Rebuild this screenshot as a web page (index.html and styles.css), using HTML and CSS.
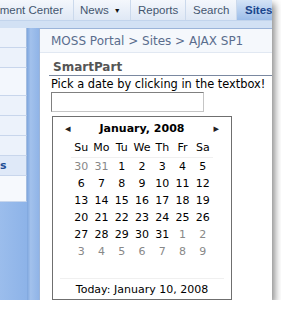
FILE: index.html
```html
<!DOCTYPE html>
<html lang="en">
<head>
  <meta charset="UTF-8" />
  <title>SmartPart</title>
  <link rel="stylesheet" href="styles.css">
</head>
<body>
  <div class="frame">
    <div class="topnav">
      <span class="tab first">Document Center</span>
      <span class="tab news">News <span class="caret">▼</span></span>
      <span class="tab reports">Reports</span>
      <span class="tab search">Search</span>
      <span class="tab selected">Sites</span>
    </div>
    <div class="band"></div>
    <div class="workspace">
      <div class="leftnav">
        <div class="navitem"></div>
        <div class="navitem"></div>
        <div class="navitem tall"></div>
        <div class="navitem"></div>
        <div class="navitem"></div>
        <div class="navitem"></div>
        <div class="navitem current">s</div>
        <div class="navitem last"></div>
      </div>
      <div class="gutter"></div>
      <div class="main">
        <div class="crumb">MOSS Portal &gt; Sites &gt; AJAX SP1</div>
        <div class="webpart">
          <div class="wp-title">SmartPart</div>
          <div class="hint">Pick a date by clicking in the textbox!</div>
          <input type="text" class="datebox" />
          <div class="calendar">
            <div class="cal-head">
              <span class="arrow">◂</span>
              <span class="month">January, 2008</span>
              <span class="arrow">▸</span>
            </div>
            <div class="days" id="days"></div>
            <div class="today">Today: January 10, 2008</div>
          </div>
        </div>
      </div>
    </div>
  </div>

  <script>
    const names = ["Su", "Mo", "Tu", "We", "Th", "Fr", "Sa"];
    const grid = document.getElementById("days");
    names.forEach(n => {
      const c = document.createElement("span");
      c.className = "dayname";
      c.textContent = n;
      grid.appendChild(c);
    });
    const cells = [30, 31];
    for (let d = 1; d <= 31; d++) cells.push(d);
    for (let d = 1; d <= 9; d++) cells.push(d);
    cells.forEach((d, i) => {
      const c = document.createElement("span");
      const other = i < 2 || i > 32;
      c.className = other ? "day other" : "day";
      c.textContent = d;
      grid.appendChild(c);
    });
  </script>
</body>
</html>
```

FILE: styles.css
```css
body {
  margin: 0;
  background: #fff;
  font-family: "DejaVu Sans", Verdana, sans-serif;
}

.frame {
  width: 272px;
  height: 300px;
  overflow: hidden;
  display: flex;
  flex-direction: column;
  box-shadow: 3px 4px 7px rgba(0, 0, 0, 0.45);
}

.topnav {
  height: 20px;
  display: flex;
  align-items: stretch;
  background: linear-gradient(to bottom, #f4f7fc, #dfe8f5);
  border-bottom: 1px solid #c2d4ec;
  font-family: "Liberation Sans", Arial, sans-serif;
  font-size: 11.5px;
  color: #44566f;
  white-space: nowrap;
}

.tab {
  display: flex;
  align-items: center;
  flex: none;
  overflow: hidden;
  box-sizing: border-box;
  border-right: 1px solid #cbd9ec;
}

.tab.first {
  width: 74px;
  justify-content: flex-end;
  padding-right: 10px;
}

.tab.news {
  width: 57px;
  padding-left: 6px;
}

.tab.reports {
  width: 55px;
  padding-left: 7px;
}

.tab.search {
  width: 51px;
  padding-left: 7px;
}

.caret {
  font-size: 7px;
  margin-left: 5px;
  color: #111;
}

.tab.selected {
  flex: 1;
  padding-left: 8px;
  border-right: none;
  font-weight: bold;
  color: #1a458c;
  background: linear-gradient(to bottom, #d4e3f6, #9cbde9);
}

.band {
  height: 7px;
  background: #d2e1f4;
}

.workspace {
  flex: 1;
  display: flex;
  background: #d2e1f4;
}

.leftnav {
  width: 27px;
  display: flex;
  flex-direction: column;
  background: linear-gradient(to right, #9bbdec, #8db3e8);
}

.navitem {
  height: 19px;
  flex: none;
  background: #ecf2fb;
  border-right: 1px solid #a4bde0;
  border-bottom: 1px solid #c8d6ec;
  font-size: 11px;
  font-weight: bold;
  color: #1e4f95;
  display: flex;
  align-items: center;
}

.navitem.tall {
  height: 27px;
  background: #f3f7fd;
}

.navitem.current {
  background: #dfe9f8;
}

.navitem.last {
  height: 25px;
  background: #f6f9fd;
}

.gutter {
  width: 12px;
  background: linear-gradient(to right, #7ea6de, #a2c1ec 30%, #90b4e7);
}

.main {
  flex: 1;
  background: #fff;
  border-left: 1px solid #9bb4d9;
  border-top: 1px solid #9bb4d9;
  display: flex;
  flex-direction: column;
}

.crumb {
  height: 23px;
  padding-left: 11px;
  display: flex;
  align-items: center;
  background: #f5f8fc;
  border-bottom: 1px solid #e1e8f2;
  font-size: 12px;
  color: #5a6d8d;
}

.webpart {
  padding: 7px 0 0 11px;
  font-size: 11.4px;
  color: #000;
}

.wp-title {
  height: 14px;
  line-height: 14px;
  font-size: 12px;
  font-weight: bold;
  color: #555;
  padding-left: 4px;
  padding-bottom: 1px;
  border-bottom: 1px solid #7a88a0;
  margin-left: -2px;
}

.hint {
  line-height: 16px;
}

.datebox {
  display: block;
  margin: 0;
  width: 153px;
  height: 20px;
  box-sizing: border-box;
  border: 1px solid #c5c5c5;
  border-top-color: #808080;
  border-left-color: #808080;
  padding: 0;
}

.calendar {
  margin: 4px 0 0 1px;
  width: 180px;
  height: 184px;
  box-sizing: border-box;
  border: 1px solid #6f6f6f;
  display: flex;
  flex-direction: column;
  align-items: center;
  padding-top: 1px;
}

.cal-head {
  width: 154px;
  height: 20px;
  display: flex;
  align-items: center;
  justify-content: space-between;
  font-size: 11px;
}

.month {
  font-weight: bold;
}

.arrow {
  font-size: 11px;
  color: #222;
}

.days {
  width: 142px;
  display: grid;
  grid-template-columns: repeat(7, 1fr);
  grid-template-rows: 20px repeat(6, 17px);
  font-size: 11px;
}

.dayname {
  display: flex;
  align-items: center;
  justify-content: center;
  border-bottom: 1px solid #f0f0f0;
}

.day {
  display: flex;
  align-items: center;
  justify-content: center;
}

.day.other {
  color: #888;
}

.today {
  margin-top: auto;
  width: 164px;
  height: 20px;
  border-top: 1px solid #f0f0f0;
  display: flex;
  align-items: center;
  justify-content: center;
  font-size: 11px;
}
```
